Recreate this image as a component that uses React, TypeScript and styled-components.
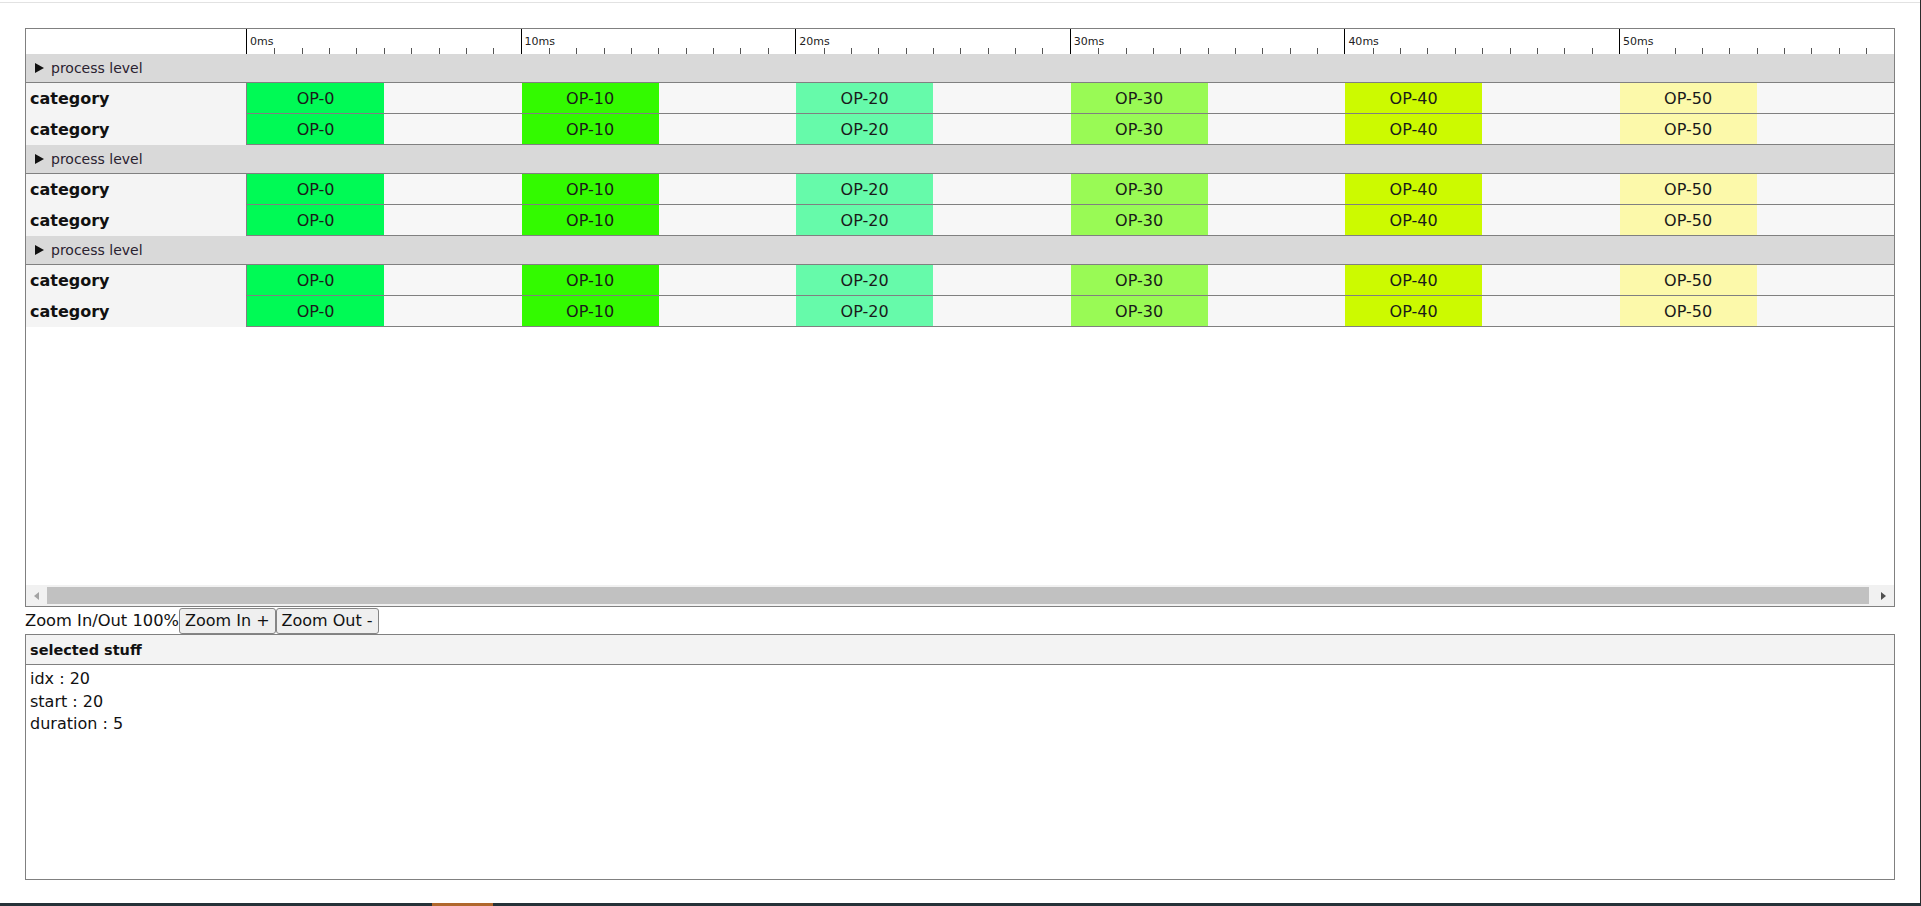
import React, { useState } from 'react';
import styled, { createGlobalStyle } from 'styled-components';

interface IOp {
    idx: number;
    start: number;
    duration: number;
}

const TOTAL_MS = 60;
const TRACK_WIDTH = 1647;
const PX_PER_MS = TRACK_WIDTH / TOTAL_MS;

const opColors: { [key: number]: string } = {
    0: '#00fa55',
    10: '#33fa00',
    20: '#66faaa',
    30: '#99fa55',
    40: '#ccfa00',
    50: '#fcf9aa',
};

const ops: IOp[] = [0, 10, 20, 30, 40, 50].map((n) => ({ idx: n, start: n, duration: 5 }));

const groups = [
    { name: 'process level', categories: ['category', 'category'] },
    { name: 'process level', categories: ['category', 'category'] },
    { name: 'process level', categories: ['category', 'category'] },
];

const GlobalStyle = createGlobalStyle`
    html, body {
        margin: 0;
        padding: 0;
        background: #fff;
    }
    body {
        font-family: "DejaVu Sans", "Liberation Sans", sans-serif;
        color: #111;
    }
`;

export default function App() {

    const [ selected, setSelected ] = useState<IOp>(ops[2]);

    const [ zoom, setZoom ] = useState<number>(100);

    return (
        <Page>
            <GlobalStyle />
            <Screen>
                <Main>
                    <TopRule />
                    <Content>

                        <Timeline>
                            <Ruler>
                                <Gutter />
                                <RulerTrack>
                                    {Array.from({ length: TOTAL_MS }).map((_, i) => (
                                        <Tick key={i} $major={i % 10 === 0}>
                                            {i % 10 === 0 && <TickLabel>{i}ms</TickLabel>}
                                        </Tick>
                                    ))}
                                </RulerTrack>
                            </Ruler>

                            {groups.map((g, gi) => (
                                <div key={gi}>
                                    <GroupRow>
                                        <Arrow viewBox="0 0 9 10">
                                            <polygon points="0,0 9,5 0,10" fill="#111" />
                                        </Arrow>
                                        {g.name}
                                    </GroupRow>
                                    {g.categories.map((c, ci) => (
                                        <CategoryRow key={ci}>
                                            <CategoryLabel>{c}</CategoryLabel>
                                            <Track>
                                                {ops.map((op) => (
                                                    <OpBox
                                                        key={op.idx}
                                                        $color={opColors[op.idx]}
                                                        onClick={() => setSelected(op)}
                                                        style={{
                                                            left: op.start * PX_PER_MS * zoom / 100,
                                                            width: op.duration * PX_PER_MS * zoom / 100,
                                                        }}
                                                    >
                                                        OP-{op.idx}
                                                    </OpBox>
                                                ))}
                                            </Track>
                                        </CategoryRow>
                                    ))}
                                </div>
                            ))}

                            <Filler />

                            <Scrollbar>
                                <ScrollBtn>
                                    <ScrollArrow $dir="left" />
                                </ScrollBtn>
                                <Thumb />
                                <ScrollBtn>
                                    <ScrollArrow $dir="right" />
                                </ScrollBtn>
                            </Scrollbar>
                        </Timeline>

                        <ZoomBar>
                            <ZoomText>Zoom In/Out {zoom}%</ZoomText>
                            <Btn onClick={() => setZoom(zoom + 10)}>Zoom In +</Btn>
                            <Btn onClick={() => setZoom(Math.max(10, zoom - 10))}>Zoom Out -</Btn>
                        </ZoomBar>

                        <Panel>
                            <PanelHead>selected stuff</PanelHead>
                            <PanelBody>
                                <div>idx : {selected.idx}</div>
                                <div>start : {selected.start}</div>
                                <div>duration : {selected.duration}</div>
                            </PanelBody>
                        </Panel>

                    </Content>
                </Main>
                <RightEdge />
            </Screen>
            <BottomBar>
                <BarAccent />
            </BottomBar>
        </Page>
    );
}

const Page = styled.div`
    display: flex;
    flex-direction: column;
    height: 100vh;
    overflow: hidden;
`;

const Screen = styled.div`
    flex: 1;
    display: flex;
    min-height: 0;
`;

const Main = styled.div`
    flex: 1;
    display: flex;
    flex-direction: column;
`;

const TopRule = styled.div`
    margin-top: 2px;
    height: 1px;
    background: #e2e2e2;
`;

const Content = styled.div`
    padding: 25px 0 0 25px;
    width: 1870px;
`;

const RightEdge = styled.div`
    width: 1px;
    background: #2b2b2b;
`;

const BottomBar = styled.div`
    height: 3px;
    background: #263238;
    display: flex;
`;

const BarAccent = styled.div`
    margin-left: 432px;
    width: 61px;
    background: #b0672c;
`;

const Timeline = styled.div`
    box-sizing: border-box;
    height: 579px;
    border: 1px solid #808080;
    display: flex;
    flex-direction: column;
    overflow: hidden;
`;

const Ruler = styled.div`
    display: flex;
    height: 25px;
    flex-shrink: 0;
    background: #fff;
`;

const Gutter = styled.div`
    width: 220px;
    flex-shrink: 0;
`;

const RulerTrack = styled.div`
    flex: 1;
    display: flex;
`;

const Tick = styled.div<{ $major: boolean }>`
    flex: 1 1 0;
    position: relative;
    box-sizing: border-box;
    border-left: ${p => p.$major ? '1px solid #000' : 'none'};

    &::before {
        content: '';
        display: ${p => p.$major ? 'none' : 'block'};
        position: absolute;
        left: 0;
        bottom: 0;
        width: 1px;
        height: 6px;
        background: #555;
    }
`;

const TickLabel = styled.span`
    position: absolute;
    left: 3px;
    top: 7px;
    font-size: 11px;
    line-height: 11px;
    color: #222;
    white-space: nowrap;
`;

const GroupRow = styled.div`
    height: 28px;
    border-bottom: 1px solid #808080;
    background: #d9d9d9;
    display: flex;
    align-items: center;
    gap: 7px;
    padding-left: 9px;
    font-size: 14px;
    color: #2a2230;
`;

const Arrow = styled.svg`
    width: 9px;
    height: 10px;
`;

const CategoryRow = styled.div`
    display: flex;
    height: 31px;
`;

const CategoryLabel = styled.div`
    width: 220px;
    flex-shrink: 0;
    box-sizing: border-box;
    padding-left: 4px;
    background: #f4f4f4;
    display: flex;
    align-items: center;
    font-weight: bold;
    font-size: 16px;
    color: #111;
`;

const Track = styled.div`
    flex: 1;
    position: relative;
    border-left: 1px solid #808080;
    border-bottom: 1px solid #808080;
    background: #f7f7f7;
`;

const OpBox = styled.div<{ $color: string }>`
    position: absolute;
    top: 0;
    bottom: 0;
    background: ${p => p.$color};
    display: flex;
    align-items: center;
    justify-content: center;
    font-size: 16px;
    color: #1a1a1a;
    cursor: pointer;
`;

const Filler = styled.div`
    flex: 1;
`;

const Scrollbar = styled.div`
    height: 21px;
    flex-shrink: 0;
    background: #f1f1f1;
    display: flex;
    align-items: center;
`;

const ScrollBtn = styled.div`
    width: 21px;
    height: 21px;
    display: flex;
    align-items: center;
    justify-content: center;
    flex-shrink: 0;
`;

const ScrollArrow = styled.div<{ $dir: 'left' | 'right' }>`
    width: 0;
    height: 0;
    border-top: 4px solid transparent;
    border-bottom: 4px solid transparent;
    ${p => p.$dir === 'left'
        ? 'border-right: 5px solid #a3a3a3;'
        : 'border-left: 5px solid #505050;'}
`;

const Thumb = styled.div`
    flex: 1;
    height: 17px;
    margin: 0 4px 0 0;
    background: #c1c1c1;
`;

const ZoomBar = styled.div`
    height: 27px;
    display: flex;
    align-items: center;
    font-size: 16.3px;
`;

const ZoomText = styled.span`
    color: #111;
`;

const Btn = styled.button`
    height: 26px;
    padding: 0 5px;
    margin: 0;
    font-family: inherit;
    font-size: 16px;
    color: #111;
    background: #efefef;
    border: 1px solid #858585;
    border-radius: 3px;
    cursor: pointer;
`;

const Panel = styled.div`
    box-sizing: border-box;
    height: 246px;
    border: 1px solid #808080;
`;

const PanelHead = styled.div`
    height: 29px;
    border-bottom: 1px solid #808080;
    background: #f3f3f3;
    display: flex;
    align-items: center;
    padding-left: 4px;
    font-weight: bold;
    font-size: 14.5px;
`;

const PanelBody = styled.div`
    padding: 3px 4px;
    font-size: 16px;
    line-height: 22.5px;
    color: #111;
`;
